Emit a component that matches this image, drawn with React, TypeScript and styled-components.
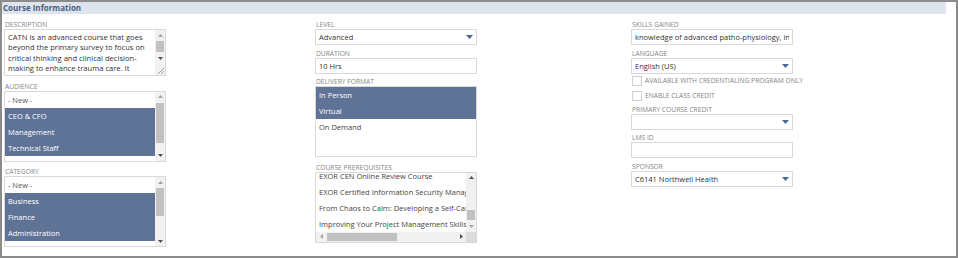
import React from "react";
import styled, { createGlobalStyle } from "styled-components";

const Global = createGlobalStyle`
  html, body { margin: 0; padding: 0; background: #fff; }
  body { font-family: "Open Sans", "Liberation Sans", sans-serif; }
`;

const Frame = styled.div`
  width: 958px;
  height: 258px;
  box-sizing: border-box;
  border: 2px solid #8c8c8c;
  background: #fff;
  overflow: hidden;
`;

const Header = styled.div`
  margin-right: 10px;
  height: 12px;
  background: #dee4ee;
  color: #4a5d7d;
  font-size: 8px;
  font-weight: 700;
  line-height: 12px;
  padding-left: 1px;
`;

const Body = styled.div`
  display: grid;
  grid-template-columns: 311px 316px 162px;
  padding: 6px 0 0 2px;
`;

const Column = styled.div<{ $gap: number }>`
  display: flex;
  flex-direction: column;
  gap: ${(p) => p.$gap}px;
`;

const Field = styled.div<{ $mt?: number }>`
  display: flex;
  flex-direction: column;
  margin-top: ${(p) => p.$mt ?? 0}px;
`;

const Label = styled.div`
  height: 9px;
  line-height: 9px;
  font-size: 6.7px;
  color: #858585;
  text-transform: uppercase;
  white-space: nowrap;
  padding-left: 1px;
`;

const Box = styled.div`
  width: 162px;
  height: 16px;
  box-sizing: border-box;
  border: 1px solid #d9d9d9;
  padding: 0 3px 0 3px;
  display: flex;
  align-items: center;
  justify-content: space-between;
  gap: 4px;
  font-size: 7.5px;
  color: #333;
  white-space: nowrap;
  overflow: hidden;
`;

const BoxText = styled.span`
  overflow: hidden;
  white-space: nowrap;
`;

const TextArea = styled.div`
  width: 162px;
  height: 47px;
  box-sizing: border-box;
  border: 1px solid #d9d9d9;
  display: flex;
  overflow: hidden;
`;

const AreaText = styled.div`
  flex: 1;
  padding: 2px 3px;
  font-size: 7.6px;
  line-height: 10.3px;
  color: #333;
  overflow: hidden;
`;

const ScrollCol = styled.div`
  width: 10px;
  flex: none;
  display: flex;
  flex-direction: column;
  background: #f1f1f1;
`;

const Resizer = styled.div`
  height: 12px;
  flex: none;
  display: flex;
  align-items: flex-end;
  justify-content: flex-end;
`;

const VBar = styled.div<{ $fill?: boolean }>`
  width: 10px;
  flex: ${(p) => (p.$fill ? "1" : "none")};
  align-self: stretch;
  display: flex;
  flex-direction: column;
  background: #f1f1f1;
`;

const HBar = styled.div`
  height: 10px;
  display: flex;
  background: #f1f1f1;
`;

const Btn = styled.div`
  width: 10px;
  height: 10px;
  flex: none;
  display: flex;
  align-items: center;
  justify-content: center;
`;

const VTrack = styled.div`
  flex: 1;
  display: flex;
  flex-direction: column;
  align-items: center;
`;

const HTrack = styled.div`
  flex: 1;
  display: flex;
  align-items: center;
`;

const VThumb = styled.div<{ $top: number; $h: number }>`
  width: 8px;
  flex: none;
  margin-top: ${(p) => p.$top}px;
  height: ${(p) => p.$h}px;
  background: #c1c1c1;
`;

const HThumb = styled.div<{ $left: number; $w: number }>`
  height: 8px;
  flex: none;
  margin-left: ${(p) => p.$left}px;
  width: ${(p) => p.$w}px;
  background: #c1c1c1;
`;

const ListBox = styled.div<{ $h: number }>`
  width: 162px;
  height: ${(p) => p.$h}px;
  box-sizing: border-box;
  border: 1px solid #d9d9d9;
  display: flex;
  overflow: hidden;
`;

const List = styled.div<{ $shift?: number }>`
  flex: 1;
  min-width: 0;
  overflow: hidden;
  display: flex;
  flex-direction: column;
  margin-top: ${(p) => p.$shift ?? 0}px;
`;

const Row = styled.div<{ $sel?: boolean; $muted?: boolean }>`
  height: 16px;
  flex: none;
  line-height: 16px;
  padding: 0 3px;
  font-size: 7.5px;
  white-space: nowrap;
  overflow: hidden;
  background: ${(p) => (p.$sel ? "#5f7397" : "transparent")};
  color: ${(p) => (p.$sel ? "#fff" : p.$muted ? "#555" : "#444")};
`;

const Grid2 = styled.div`
  width: 162px;
  height: 71px;
  box-sizing: border-box;
  border: 1px solid #d9d9d9;
  display: grid;
  grid-template-columns: 1fr 10px;
  grid-template-rows: 1fr 10px;
  overflow: hidden;
`;

const Corner = styled.div`
  background: #dcdcdc;
`;

const CheckGroup = styled.div`
  display: flex;
  flex-direction: column;
  gap: 4px;
  margin-top: -2px;
`;

const CheckRow = styled.div`
  height: 11px;
  display: flex;
  align-items: center;
  gap: 3px;
  padding-left: 1px;
`;

const CheckBox = styled.div`
  width: 10px;
  height: 10px;
  flex: none;
  box-sizing: border-box;
  border: 1px solid #cfcfcf;
  background: #fff;
`;

const CheckText = styled.span`
  font-size: 6.7px;
  color: #858585;
  text-transform: uppercase;
  white-space: nowrap;
`;

type Dir = "up" | "down" | "left" | "right";
const Arrow = ({ dir, on }: { dir: Dir; on: boolean }) => {
  const pts: Record<Dir, string> = {
    up: "0,3 5,3 2.5,0",
    down: "0,0 5,0 2.5,3",
    left: "3,0 3,5 0,2.5",
    right: "0,0 0,5 3,2.5",
  };
  const v = dir === "up" || dir === "down";
  return (
    <svg width={v ? 5 : 3} height={v ? 3 : 5} viewBox={v ? "0 0 5 3" : "0 0 3 5"}>
      <polygon points={pts[dir]} fill={on ? "#505050" : "#a3a3a3"} />
    </svg>
  );
};

const DropArrow = () => (
  <svg width="7" height="4" viewBox="0 0 7 4" style={{ flex: "none" }}>
    <polygon points="0,0 7,0 3.5,4" fill="#4b6894" />
  </svg>
);

const VScroll = ({
  top,
  h,
  up,
  down,
  fill,
}: {
  top: number;
  h: number;
  up: boolean;
  down: boolean;
  fill?: boolean;
}) => (
  <VBar $fill={fill}>
    <Btn>
      <Arrow dir="up" on={up} />
    </Btn>
    <VTrack>
      <VThumb $top={top} $h={h} />
    </VTrack>
    <Btn>
      <Arrow dir="down" on={down} />
    </Btn>
  </VBar>
);

const Select = ({ value }: { value: string }) => (
  <Box>
    <BoxText>{value}</BoxText>
    <DropArrow />
  </Box>
);

export default function App() {
  return (
    <>
      <Global />
      <Frame>
        <Header>Course Information</Header>
        <Body>
          <Column $gap={5.5}>
            <Field>
              <Label>Description</Label>
              <TextArea>
                <AreaText>
                  CATN is an advanced course that goes beyond the primary survey to focus on critical thinking and
                  clinical decision-making to enhance trauma care. It provides a review of trauma nursing.
                </AreaText>
                <ScrollCol>
                  <VScroll top={1} h={11} up={false} down={true} fill />
                  <Resizer>
                    <svg width="8" height="8" viewBox="0 0 8 8">
                      <line x1="7" y1="1" x2="1" y2="7" stroke="#8a8a8a" strokeWidth="0.8" />
                      <line x1="7" y1="4" x2="4" y2="7" stroke="#8a8a8a" strokeWidth="0.8" />
                    </svg>
                  </Resizer>
                </ScrollCol>
              </TextArea>
            </Field>
            <Field>
              <Label>Audience</Label>
              <ListBox $h={71}>
                <List>
                  <Row $muted>- New -</Row>
                  <Row $sel>CEO &amp; CFO</Row>
                  <Row $sel>Management</Row>
                  <Row $sel>Technical Staff</Row>
                  <Row>Clinical Staff</Row>
                </List>
                <VScroll top={1} h={40} up={false} down={true} />
              </ListBox>
            </Field>
            <Field>
              <Label>Category</Label>
              <ListBox $h={71}>
                <List>
                  <Row $muted>- New -</Row>
                  <Row $sel>Business</Row>
                  <Row $sel>Finance</Row>
                  <Row $sel>Administration</Row>
                  <Row>Clinical Practice</Row>
                </List>
                <VScroll top={1} h={28} up={false} down={true} />
              </ListBox>
            </Field>
          </Column>

          <Column $gap={3.5}>
            <Field>
              <Label>Level</Label>
              <Select value="Advanced" />
            </Field>
            <Field>
              <Label>Duration</Label>
              <Box>
                <BoxText>10 Hrs</BoxText>
              </Box>
            </Field>
            <Field>
              <Label>Delivery Format</Label>
              <ListBox $h={71}>
                <List>
                  <Row $sel>In Person</Row>
                  <Row $sel>Virtual</Row>
                  <Row>On Demand</Row>
                </List>
              </ListBox>
            </Field>
            <Field $mt={2}>
              <Label>Course Prerequisites</Label>
              <Grid2>
                <List $shift={-5}>
                  <Row>EXOR CEN Online Review Course</Row>
                  <Row>EXOR Certified Information Security Manager</Row>
                  <Row>From Chaos to Calm: Developing a Self-Care Plan</Row>
                  <Row>Improving Your Project Management Skills</Row>
                </List>
                <VScroll top={27} h={10} up={true} down={false} />
                <HBar>
                  <Btn>
                    <Arrow dir="left" on={false} />
                  </Btn>
                  <HTrack>
                    <HThumb $left={1} $w={70} />
                  </HTrack>
                  <Btn>
                    <Arrow dir="right" on={true} />
                  </Btn>
                </HBar>
                <Corner />
              </Grid2>
            </Field>
          </Column>

          <Column $gap={3.5}>
            <Field>
              <Label>Skills Gained</Label>
              <Box>
                <BoxText>knowledge of advanced patho-physiology, injury mechanisms</BoxText>
              </Box>
            </Field>
            <Field>
              <Label>Language</Label>
              <Select value="English (US)" />
            </Field>
            <CheckGroup>
              <CheckRow>
                <CheckBox />
                <CheckText>Available with credentialing program only</CheckText>
              </CheckRow>
              <CheckRow>
                <CheckBox />
                <CheckText>Enable class credit</CheckText>
              </CheckRow>
            </CheckGroup>
            <Field>
              <Label>Primary Course Credit</Label>
              <Select value="" />
            </Field>
            <Field>
              <Label>LMS ID</Label>
              <Box />
            </Field>
            <Field>
              <Label>Sponsor</Label>
              <Select value="C6141 Northwell Health" />
            </Field>
          </Column>
        </Body>
      </Frame>
    </>
  );
}
